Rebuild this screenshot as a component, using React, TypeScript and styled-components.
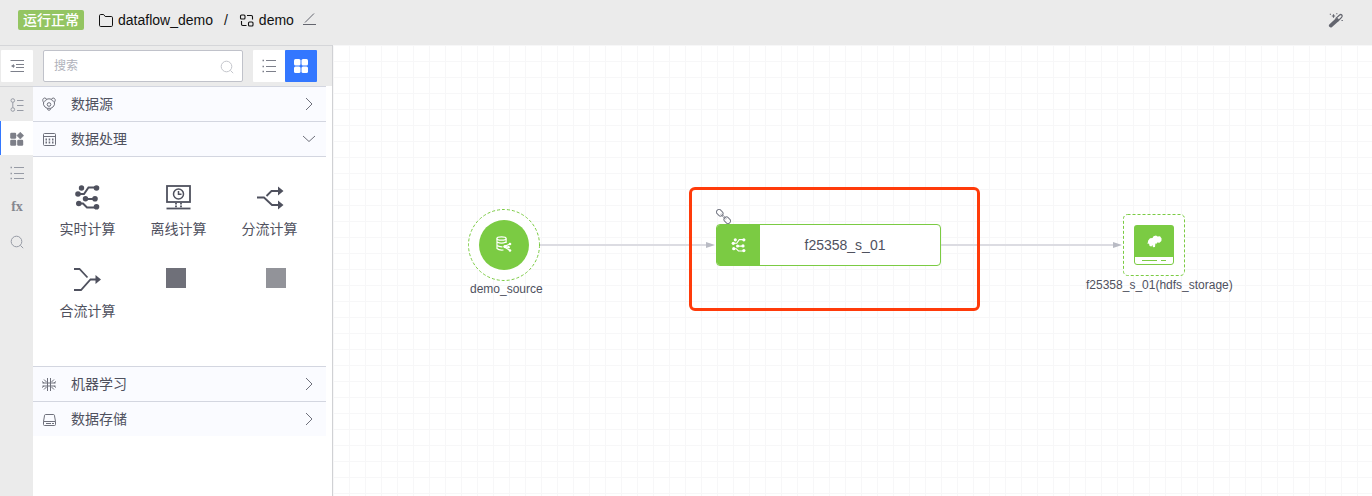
import React from 'react';
import styled, { createGlobalStyle, css } from 'styled-components';

const GlobalStyle = createGlobalStyle`
  *, *::before, *::after { box-sizing: border-box; }
  body {
    margin: 0;
    font-family: "Liberation Sans", "Noto Sans CJK SC", sans-serif;
    font-size: 14px;
    line-height: 20px;
    color: #4f515e;
    background: #fff;
  }
  button, input { font: inherit; color: inherit; }
  button { border: 0; padding: 0; background: none; cursor: pointer; }
  svg { display: block; flex: none; }
`;

const Page = styled.div`
  display: flex;
  flex-direction: column;
  min-height: 100vh;
`;

const Header = styled.header`
  display: flex;
  align-items: center;
  justify-content: space-between;
  height: 45px;
  padding: 0 28px 5px 18px;
  background: #ebebeb;
  color: #111;
`;

const HeaderGroup = styled.div`
  display: flex;
  align-items: center;
  gap: 14px;
`;

const StatusBadge = styled.span`
  padding: 0 5px;
  border-radius: 2px;
  background: #94c562;
  color: #fff;
  font-weight: 500;
`;

const Breadcrumb = styled.nav`
  display: flex;
  align-items: center;
  gap: 11px;
`;

const Crumb = styled.a`
  display: flex;
  align-items: center;
  gap: 5px;
  color: inherit;
  text-decoration: none;
`;

const CurrentCrumb = styled.span`
  display: flex;
  align-items: center;
  gap: 8px;
`;

const IconButton = styled.button`
  display: flex;
  color: #63656e;
`;

const Workspace = styled.div`
  display: flex;
  flex: 1;
`;

const Sidebar = styled.aside`
  display: flex;
  flex-direction: column;
  flex: none;
  width: 333px;
  border-top: 1px solid #d5d6d9;
  border-right: 1px solid #d0d1d4;
`;

const Toolbar = styled.div`
  display: flex;
  align-items: center;
  gap: 10px;
  height: 40px;
  padding-left: 1px;
  background: #ebebeb;
`;

const SquareButton = styled.button<{ $active?: boolean }>`
  display: grid;
  place-items: center;
  width: 32px;
  height: 32px;
  border-radius: 1px;
  background: ${p => (p.$active ? '#3377ff' : '#fff')};
  color: ${p => (p.$active ? '#fff' : '#7d808b')};
`;

const SearchBox = styled.label`
  display: flex;
  align-items: center;
  width: 200px;
  height: 32px;
  padding: 0 8px 0 10px;
  border: 1px solid #c0c2ca;
  border-radius: 2px;
  background: #fff;
  color: #c4c6cc;
`;

const SearchInput = styled.input`
  flex: 1;
  min-width: 0;
  padding: 0;
  border: 0;
  outline: 0;
  background: none;
  font-size: 12px;
  &::placeholder { color: #b0b2bb; opacity: 1; }
`;

const ViewToggle = styled.div`
  display: flex;
`;

const SideBody = styled.div`
  display: flex;
  flex: 1;
`;

const Rail = styled.nav`
  width: 33px;
  border-top: 1px solid #d5d6d9;
  background: #ebebeb;
`;

const RailButton = styled.button<{ $active?: boolean }>`
  display: grid;
  place-items: center;
  width: 100%;
  height: 34px;
  padding-top: 2px;
  color: #979ba5;
  border-left: 1px solid transparent;
  ${p => p.$active && css`
    background: #fff;
    color: #7d7f88;
    border-left-color: #3377ff;
  `}
`;

const Fx = styled.span`
  font: bold 14px/20px "Liberation Serif", serif;
  color: #85878f;
`;

const Panels = styled.div`
  width: 293px;
`;

const PanelHeading = styled.button`
  display: flex;
  align-items: center;
  width: 100%;
  height: 35px;
  padding: 0 10px 0 8px;
  border-top: 1px solid #d3d6e0;
  background: #fafbff;
  text-align: left;
  svg { color: #6e707b; }
`;

const PanelTitle = styled.span`
  flex: 1;
  padding-left: 14px;
`;

const PanelBody = styled.div`
  height: 210px;
  padding: 26px 9px 0;
  border-top: 1px solid #d3d6e0;
`;

const TileRow = styled.div`
  display: flex;
  height: 82px;
`;

const Tile = styled.button`
  display: flex;
  flex-direction: column;
  align-items: center;
  gap: 8px;
  width: 91px;
`;

const Swatches = styled.div`
  display: flex;
  gap: 80px;
  padding: 3px 0 0 33px;
`;

const Swatch = styled.span<{ $color: string }>`
  width: 20px;
  height: 20px;
  background: ${p => p.$color};
`;

const Canvas = styled.main`
  position: relative;
  flex: 1;
  min-width: 0;
  overflow: hidden;
  background-image:
    linear-gradient(#f7f7f8 1px, transparent 1px),
    linear-gradient(90deg, #f7f7f8 1px, transparent 1px);
  background-size: 16px 16px;
`;

const Edges = styled.svg`
  position: absolute;
  inset: 0;
  width: 100%;
  height: 100%;
`;

const Placed = styled.div<{ $x: number; $y: number }>`
  position: absolute;
  left: ${p => p.$x}px;
  top: ${p => p.$y}px;
`;

const Caption = styled(Placed)`
  font-size: 12px;
  line-height: 18px;
  white-space: nowrap;
`;

const ProcessNode = styled.div`
  display: flex;
  width: 225px;
  height: 42px;
  border: 1px solid #7bcb43;
  border-radius: 4px;
  background: #fff;
  overflow: hidden;
`;

const ProcessIcon = styled.span`
  display: grid;
  place-items: center;
  width: 43px;
  background: #7bcb43;
  color: #fff;
`;

const ProcessName = styled.span`
  flex: 1;
  padding-right: 10px;
  text-align: center;
  line-height: 40px;
`;

const Highlight = styled.div`
  width: 291px;
  height: 124px;
  border: 3px solid #ff3b0a;
  border-radius: 6px;
`;

type IconProps = { w: number; h?: number; box?: string; sw?: number; children: React.ReactNode };
const Icon = ({ w, h = w, box, sw = 1, children }: IconProps) => (
  <svg width={w} height={h} viewBox={box ?? `0 0 ${w} ${h}`} fill="none" stroke="currentColor" strokeWidth={sw} aria-hidden="true">
    {children}
  </svg>
);

const Folder = () => (
  <Icon w={15} h={14}>
    <path d="M1.5 2.7Q1.5 1.5 2.7 1.5H5.6L7.2 3.5H13.3Q14.5 3.5 14.5 4.7V12.3Q14.5 13.5 13.3 13.5H2.7Q1.5 13.5 1.5 12.3Z" />
  </Icon>
);
const Flow = () => (
  <Icon w={15} h={14} sw={1.1}>
    <rect x="1.5" y="2" width="4.5" height="4" rx="1" />
    <rect x="9.5" y="9" width="4.5" height="4" rx="1" />
    <path d="M8 2.5H12.3Q13.5 2.5 13.5 3.7V6.5M2.5 8V11.3Q2.5 12.5 3.7 12.5H7.5" />
  </Icon>
);
const Pencil = () => (
  <Icon w={15} h={14}><path d="M3 9.5L12 .5M1 11.5H14" /></Icon>
);
const Wand = () => (
  <Icon w={16}>
    <path d="M2.8 13.6L9 8" strokeWidth="3.8" strokeLinecap="round" />
    <path d="M7.6 6.6L11.6 3Q12.8 2 13.8 3Q14.8 4.2 13.6 5.4L10 9" strokeWidth="1.2" />
    <path d="M5.5 2.3V5.7M3.8 4H7.2M8.2 1.8H9.4M1.8 2.2H3M13.5 8.5H14.8" strokeWidth="1.1" />
  </Icon>
);
const Outdent = () => (
  <Icon w={16} h={14}>
    <path d="M1.5 1.5H15M7 5.5H15M7 8.5H15M1.5 12.5H15" />
    <path d="M2 7L5 5V9Z" fill="currentColor" stroke="none" /><path d="M4 7H6" />
  </Icon>
);
const Search = () => (
  <Icon w={14} h={15}><circle cx="6.5" cy="7.5" r="5.3" /><path d="M10.4 11.4L13.2 14.2" /></Icon>
);
const List = () => (
  <Icon w={16} h={14}>
    <path d="M5 1.5H15M5 7.5H15M5 12.5H15" />
    <path d="M1.5 1.5H3M1.5 7.5H3M1.5 12.5H3" strokeWidth="1.6" />
  </Icon>
);
const Grid = () => (
  <Icon w={14}>
    <g fill="currentColor" stroke="none">
      <rect width="6.5" height="6.5" rx="1.5" /><rect x="7.5" width="6.5" height="6.5" rx="1.5" />
      <rect y="7.5" width="6.5" height="6.5" rx="1.5" /><rect x="7.5" y="7.5" width="6.5" height="6.5" rx="1.5" />
    </g>
  </Icon>
);
const Tree = () => (
  <Icon w={14}>
    <circle cx="2.8" cy="2.5" r="1.8" /><circle cx="2.8" cy="11.5" r="1.8" />
    <path d="M2.8 4.3V9.7M7 2.5H13.5M7 7.5H13.5M7 12.5H13.5" />
  </Icon>
);
const Blocks = () => (
  <Icon w={14}>
    <g fill="currentColor" stroke="none">
      <rect x=".2" y=".8" width="6" height="6" rx="1.2" />
      <path d="M10.3 .2L13.7 3.6L10.3 7L6.9 3.6Z" stroke="currentColor" strokeWidth=".6" strokeLinejoin="round" />
      <rect x=".2" y="7.7" width="6" height="6" rx="1.2" /><rect x="7.2" y="7.7" width="6" height="6" rx="1.2" />
    </g>
  </Icon>
);
const Bear = () => (
  <Icon w={16}>
    <path d="M5.2 3.3Q8 2.3 10.8 3.3" />
    <path d="M2.6 6.2C1 4.6 1.8 2 3.8 2Q5.3 2.2 5.4 3.6Q5 5 3.2 5.4M13.4 6.2C15 4.6 14.2 2 12.2 2Q10.7 2.2 10.6 3.6Q11 5 12.8 5.4" />
    <path d="M2.6 6Q1.8 9 4 11L6.2 12.3Q6.4 14.2 8 14.3Q9.6 14.2 9.8 12.3L12 11Q14.2 9 13.4 6M6.2 12.3H9.8" />
    <circle cx="8" cy="8.5" r="1.8" />
  </Icon>
);
const Calendar = () => (
  <Icon w={16}>
    <rect x="2.5" y="2.5" width="12" height="12" rx="1" /><path d="M2.5 5.5H14.5" />
    <path d="M4.5 8.5H6M7.7 8.5H9.2M11 8.5H12.5M4.5 11.5H6M7.7 11.5H9.2M11 11.5H12.5" strokeWidth="2" />
  </Icon>
);
const Neuron = () => (
  <Icon w={16}>
    <path d="M6.5 2V6.5M9.5 2V6.5M6.5 9.5V15M9.5 9.5V15M1.5 7H14.5M1.5 10H14.5M6.5 6V11M9.5 6V11" />
    <path d="M3 3.5L5.5 6M13 3.5L10.5 6M3 13.5L5.5 11M13 13.5L10.5 11M1 5.5L3 7M15 5.5L13 7M1 11.5L3 10M15 11.5L13 10" />
  </Icon>
);
const Disk = () => (
  <Icon w={16}>
    <path d="M2.5 10.5L3.6 4.2Q3.8 3.5 4.5 3.5H12.5Q13.2 3.5 13.4 4.2L14.5 10.5V13.5Q14.5 14.5 13.5 14.5H3.5Q2.5 14.5 2.5 13.5ZM2.5 10.5H14.5M5 12.5H10M11 12.5H13" />
  </Icon>
);
const Chevron = ({ open }: { open?: boolean }) => (
  <Icon w={14}><path d={open ? 'M1 4L7 9.5L13 4' : 'M4 1L10 7L4 13'} /></Icon>
);
const Circuit = ({ size = 28 }: { size?: number }) => (
  <Icon w={size} box="0 0 28 28" sw={2}>
    <path d="M3 11H10L14.5 4.5H23M11 16H20M4 20.5H9L13 24.5H23" />
    <g fill="currentColor" stroke="none">
      <circle cx="7.5" cy="5" r="2.7" /><circle cx="22.5" cy="5" r="2.8" /><circle cx="4" cy="11" r="2.8" />
      <circle cx="11.5" cy="15.7" r="2.7" /><circle cx="21" cy="15.7" r="2.8" />
      <circle cx="4.8" cy="20.5" r="2.8" /><circle cx="22.5" cy="23.7" r="2.8" />
    </g>
  </Icon>
);
const Offline = () => (
  <Icon w={28} sw={1.8}>
    <rect x="2" y="3" width="23" height="16" /><circle cx="13.5" cy="11" r="5" strokeWidth="1.5" />
    <path d="M13.5 8V11.3H16.5" strokeWidth="1.5" /><path d="M1.5 25.5H25.5" />
    <path d="M11 20V24.5M16 20V24.5" strokeDasharray="1.6 1" />
  </Icon>
);
const Split = () => (
  <Icon w={28} sw={1.8}>
    <path d="M1 14.5H8L16 22H22M10.5 13L15.5 8H22" />
    <path d="M22 3.5L27.5 8L22 12.5ZM22 17.5L27.5 22L22 26.5Z" fill="currentColor" stroke="none" />
  </Icon>
);
const Merge = () => (
  <Icon w={28} sw={1.8}>
    <path d="M0 4H5.5L13.5 12.5M0 25H7L16.5 14.5H22" />
    <path d="M21.5 10L27 14.5L21.5 19Z" fill="currentColor" stroke="none" />
  </Icon>
);

const Chain = () => (
  <Icon w={15}>
    <g transform="rotate(45 7.5 7.5)" stroke="#777a86">
      <rect x="-1.3" y="5" width="7" height="5" rx="2.3" /><rect x="9.3" y="5" width="7" height="5" rx="2.3" />
      <path d="M4 6.9H11M4 8.1H11" strokeWidth=".7" />
    </g>
  </Icon>
);
const SourceShape = () => (
  <svg width="72" height="72" viewBox="0 0 72 72" aria-hidden="true">
    <circle cx="36" cy="36" r="35.5" fill="#fff" stroke="#7bcb43" strokeDasharray="3 2" />
    <circle cx="36" cy="36" r="25" fill="#7bcb43" />
    <g fill="none" stroke="#fff" strokeWidth="1.2">
      <ellipse cx="33.5" cy="29.5" rx="4.6" ry="1.7" />
      <path d="M29 29.5V39.5Q31 41.6 35.5 41M38.1 29.5V34M29 33Q33.5 35.2 38 33M29 36.6Q31 38 34.5 37.8" />
      <path d="M36 37.5L42 35M36.5 38L42 41.5M36 38H41" />
    </g>
    <g fill="#fff"><circle cx="37" cy="37.6" r="1.7" /><circle cx="42" cy="35" r="1.3" /><circle cx="40.5" cy="38.2" r="1.3" /><circle cx="42" cy="41.5" r="1.3" /></g>
  </svg>
);
const StorageShape = () => (
  <svg width="62" height="62" viewBox="0 0 62 62" aria-hidden="true">
    <rect x=".5" y=".5" width="61" height="61" rx="4" fill="#fff" stroke="#7bcb43" strokeDasharray="3 2" />
    <path d="M14 11H48Q51 11 51 14V43H11V14Q11 11 14 11Z" fill="#7bcb43" />
    <path d="M11.5 43V48Q11.5 50.5 14 50.5H48Q50.5 50.5 50.5 48V43M19 46.5H34M38 46.5H43" fill="none" stroke="#7bcb43" />
    <path fill="#fff" d="M24.5 30L25.2 26.5L27 24.2L29.5 24L30.5 22.2L33 21.5L34.5 22.4L37 22.2L38.6 24.5L38.4 27L36.5 28.8L34.2 28.4L33.6 29.8L32.4 29.6L32 33L30 33.2L29.4 31L28.4 32.5L26.6 32L26 29.6Z" />
  </svg>
);

export default function App() {
  return (
    <Page>
      <GlobalStyle />
      <Header>
        <HeaderGroup>
          <StatusBadge>运行正常</StatusBadge>
          <Breadcrumb aria-label="路径">
            <Crumb href="#project"><Folder />dataflow_demo</Crumb>
            <span>/</span>
            <CurrentCrumb>
              <Crumb href="#demo"><Flow />demo</Crumb>
              <IconButton aria-label="编辑"><Pencil /></IconButton>
            </CurrentCrumb>
          </Breadcrumb>
        </HeaderGroup>
        <IconButton aria-label="自动布局"><Wand /></IconButton>
      </Header>
      <Workspace>
        <Sidebar>
          <Toolbar>
            <SquareButton aria-label="收起"><Outdent /></SquareButton>
            <SearchBox>
              <SearchInput type="text" placeholder="搜索" aria-label="搜索" />
              <Search />
            </SearchBox>
            <ViewToggle>
              <SquareButton aria-label="列表视图"><List /></SquareButton>
              <SquareButton $active aria-label="网格视图"><Grid /></SquareButton>
            </ViewToggle>
          </Toolbar>
          <SideBody>
            <Rail aria-label="工具">
              <RailButton aria-label="结构"><Tree /></RailButton>
              <RailButton $active aria-label="组件"><Blocks /></RailButton>
              <RailButton aria-label="列表"><List /></RailButton>
              <RailButton aria-label="函数"><Fx>fx</Fx></RailButton>
              <RailButton aria-label="查找"><Search /></RailButton>
            </Rail>
            <Panels>
              <PanelHeading aria-expanded={false}><Bear /><PanelTitle>数据源</PanelTitle><Chevron /></PanelHeading>
              <PanelHeading aria-expanded><Calendar /><PanelTitle>数据处理</PanelTitle><Chevron open /></PanelHeading>
              <PanelBody>
                <TileRow>
                  <Tile><Circuit />实时计算</Tile>
                  <Tile><Offline />离线计算</Tile>
                  <Tile><Split />分流计算</Tile>
                </TileRow>
                <TileRow>
                  <Tile><Merge />合流计算</Tile>
                  <Swatches><Swatch $color="#6f7079" /><Swatch $color="#929399" /></Swatches>
                </TileRow>
              </PanelBody>
              <PanelHeading aria-expanded={false}><Neuron /><PanelTitle>机器学习</PanelTitle><Chevron /></PanelHeading>
              <PanelHeading aria-expanded={false}><Disk /><PanelTitle>数据存储</PanelTitle><Chevron /></PanelHeading>
            </Panels>
          </SideBody>
        </Sidebar>
        <Canvas>
          <Edges aria-hidden="true">
            <path d="M207 200H376M608 200H783" stroke="#dcdce2" strokeWidth="2" />
            <path d="M373 197L382 200L373 203ZM780 197L789 200L780 203Z" fill="#b9bbc4" />
          </Edges>
          <Placed $x={135} $y={164}><SourceShape /></Placed>
          <Caption $x={137} $y={235}>demo_source</Caption>
          <Placed $x={383} $y={179}>
            <ProcessNode>
              <ProcessIcon><Circuit size={16} /></ProcessIcon>
              <ProcessName>f25358_s_01</ProcessName>
            </ProcessNode>
          </Placed>
          <Placed $x={383} $y={164}><Chain /></Placed>
          <Placed $x={790} $y={169}><StorageShape /></Placed>
          <Caption $x={753} $y={231}>f25358_s_01(hdfs_storage)</Caption>
          <Placed $x={356} $y={142}><Highlight /></Placed>
        </Canvas>
      </Workspace>
    </Page>
  );
}
